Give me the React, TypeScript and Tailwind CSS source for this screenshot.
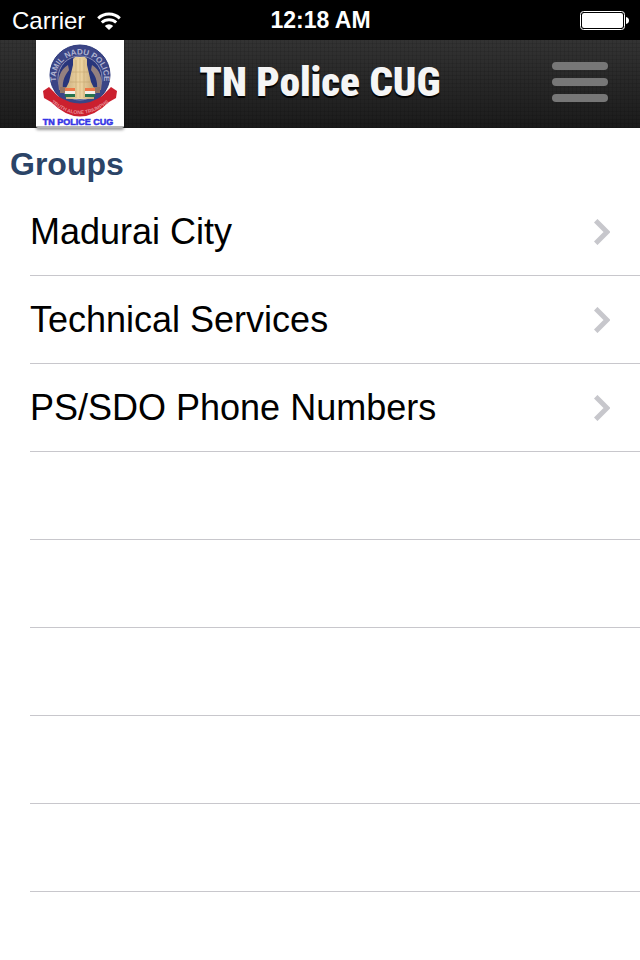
const groups = ["Madurai City", "Technical Services", "PS/SDO Phone Numbers"];
const emptyRows = [1, 2, 3, 4, 5];

const WifiIcon = () => {
  return (
    <svg className="w-6 h-[18px]" viewBox="0 0 24 18" fill="none" aria-hidden="true">
      <path d="M1.200 6.300a16 16 0 0 1 21.600 0" stroke="#fff" strokeWidth="3" />
      <path d="M4.800 10.500a10.500 10.500 0 0 1 14.400 0" stroke="#fff" strokeWidth="3" />
      <path d="M7.800 14a6 6 0 0 1 8.400 0L12 18z" fill="#fff" />
    </svg>
  );
};

const BatteryIcon = () => {
  return (
    <svg className="w-[49px] h-[19px]" viewBox="0 0 49 19" aria-hidden="true">
      <rect x="0.5" y="0.5" width="44" height="18" rx="3" fill="none" stroke="#fff" />
      <rect x="2" y="2" width="41" height="15" rx="2" fill="#fff" />
      <path d="M46 6c4 .5 4 6.500 0 7z" fill="#fff" />
    </svg>
  );
};

const Chevron = () => {
  return (
    <svg className="w-4 h-[26px]" viewBox="0 0 16 26" fill="none" aria-hidden="true">
      <path d="M1.700 1.700L13 13L1.700 24.300" stroke="#c7c7cc" strokeWidth="5" />
    </svg>
  );
};

const PoliceLogo = () => {
  return (
    <svg className="w-[88px] h-[88px]" viewBox="0 0 88 88" role="img" aria-label="TN Police CUG">
      <defs>
        <path id="ring" d="M22 48A24 24 0 1 1 66 48" />
        <path id="motto" d="M9 57Q44 91 79 57" />
        <linearGradient id="temple" x1="0" x2="1">
          <stop offset="0" stopColor="#cdb183" />
          <stop offset="0.5" stopColor="#efd6a3" />
          <stop offset="1" stopColor="#c5a777" />
        </linearGradient>
      </defs>
      <circle cx="44" cy="35" r="30" fill="#3b4586" stroke="#2e3a7c" />
      <text fontSize="8" fontWeight="bold" fill="#b0b3cf" fontFamily="Liberation Sans, sans-serif">
        <textPath href="#ring" startOffset="50%" textAnchor="middle">
          TAMIL NADU POLICE
        </textPath>
      </text>
      <circle cx="44" cy="38" r="22" fill="#28357b" stroke="#8b8fb4" />
      <path d="M23 50c-2-12 1-20 9-25l2 10v16zM65 50c2-12-1-20-9-25l-2 10v16z" fill="#94807f" />
      <path d="M27 49c-1-8 2-15 8-21v21zM61 49c1-8-2-15-8-21v21z" fill="#28357b" />
      <path d="M24 47h9v6h-9zM55 47h9v6h-9z" fill="#937467" />
      <path d="M37 19l2-2h10l2 2v6l4 17 3 6v11H30V48l3-6 4-17z" fill="url(#temple)" />
      <path d="M40 20v38M48 20v38M44 18v40M36 32h16M34 42h20" stroke="#b9985f" strokeWidth="0.700" opacity="0.600" />
      <path d="M29 48h10v3H29zM49 48h10v3H49z" fill="#ef7647" />
      <path d="M29 51h10v3H29zM49 51h10v3H49z" fill="#f3efe9" />
      <path d="M29 54h10v3H29zM49 54h10v3H49z" fill="#25734e" />
      <path d="M7 51l6-4 9 9q22 15 44 0l9-9 6 4-1 7-7 4q-29 29-58 0l-7-4z" fill="#cb202f" />
      <text fontSize="5" fontWeight="bold" fill="#e88d95" fontFamily="Liberation Sans, sans-serif">
        <textPath href="#motto" startOffset="50%" textAnchor="middle">
          TRUTH ALONE TRIUMPHS
        </textPath>
      </text>
      <text
        x="42"
        y="85"
        textAnchor="middle"
        fontSize="9"
        fontWeight="bold"
        fill="#3434e6"
        stroke="#3434e6"
        strokeWidth="0.500"
        fontFamily="Liberation Sans, sans-serif"
      >
        TN POLICE CUG
      </text>
    </svg>
  );
};

const StatusBar = () => {
  return (
    <div className="h-10 bg-black text-white grid grid-cols-3 items-center pl-3 pr-[11px] pt-px text-[24px]">
      <div className="flex items-center gap-3">
        <span>Carrier</span>
        <WifiIcon />
      </div>
      <span className="text-center text-[23px] font-bold">12:18 AM</span>
      <div className="flex justify-end">
        <BatteryIcon />
      </div>
    </div>
  );
};

const Header = () => {
  return (
    <header className="h-[88px] bg-[repeating-linear-gradient(90deg,#00000018_0_1px,transparent_1px_4px),repeating-linear-gradient(0deg,#00000018_0_1px,transparent_1px_4px),linear-gradient(#333333,#1b1b1b)] grid grid-cols-[88px_1fr_88px] items-center pl-9 pr-4">
      <div className="bg-white rounded-b-xs border-b-2 border-[#b5b5b5] shadow-[0_2px_3px_#00000066] overflow-hidden h-[88px]">
        <PoliceLogo />
      </div>
      <h1 className="text-center pr-5 pb-1 text-[#f5f5f5] text-[41px] leading-[48px] font-black font-['Roboto_Condensed','Open_Sans_Condensed',Roboto,sans-serif] [text-shadow:0_2px_1px_#000]">
        TN Police CUG
      </h1>
      <button type="button" aria-label="Menu" className="flex flex-col gap-2 justify-self-end w-14 mr-4 pb-1">
        <span className="h-2 w-full rounded-full bg-[#777777]" />
        <span className="h-2 w-full rounded-full bg-[#777777]" />
        <span className="h-2 w-full rounded-full bg-[#777777]" />
      </button>
    </header>
  );
};

const App = () => {
  return (
    <div className="w-full min-h-screen bg-white font-['Liberation_Sans',Arial,sans-serif]">
      <StatusBar />
      <Header />
      <main>
        <h2 className="h-[60px] pl-[10px] pt-4 text-[32px] leading-10 font-bold text-[#2b4467]">
          Groups
        </h2>
        <ul className="pl-[30px]">
          {groups.map((group) => (
            <li key={group} className="border-b border-[#c8c7cc]">
              <button
                type="button"
                className="w-full h-[87px] pr-[30px] flex items-center justify-between text-left text-[36px] text-black"
              >
                <span>{group}</span>
                <Chevron />
              </button>
            </li>
          ))}
          {emptyRows.map((row) => (
            <li key={row} className="h-[88px] border-b border-[#c8c7cc]" aria-hidden="true" />
          ))}
        </ul>
      </main>
    </div>
  );
};

export default App;
